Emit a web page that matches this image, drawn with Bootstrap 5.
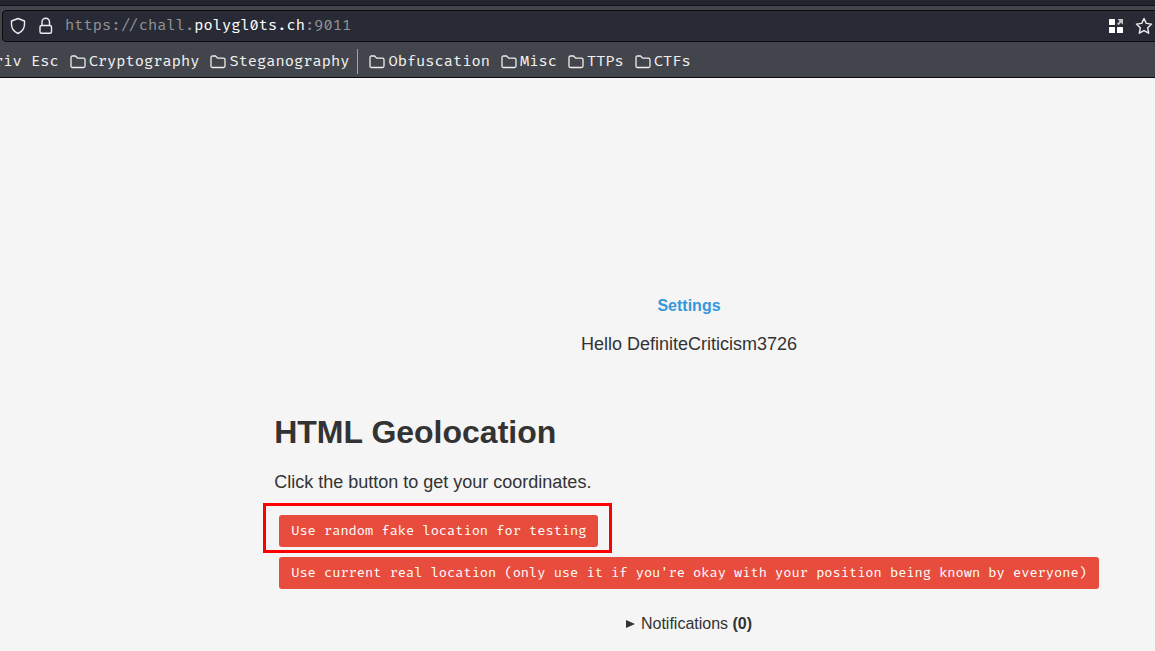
<!DOCTYPE html>
<html lang="en">
<head>
<meta charset="utf-8">
<meta name="viewport" content="width=device-width, initial-scale=1">
<title>HTML Geolocation</title>
<link href="https://cdn.jsdelivr.net/npm/bootstrap@5.3.0/dist/css/bootstrap.min.css" rel="stylesheet">
<style>
body { background: #f5f5f5; color: #333; font-family: "Liberation Sans", Arial, sans-serif; overflow-x: hidden; }
.browser { background: #43454c; border-bottom: 1px solid #0c0c0d; font-family: "Fira Code", "DejaVu Sans Mono", monospace; }
.tab-strip { height: 6px; background: #23252e; border-bottom: 1px solid #121319; }
.address { height: 32px; margin: 4px -4px 0 2px; padding: 0 5px 0 7px; background: #282a36; border: 1px solid #0c0c0d; border-radius: 4px; }
.address svg, .bookmark svg { display: block; flex: none; }
.url { font-size: 15px; line-height: 24px; margin-left: 3px; color: #939395; }
.url b { font-weight: 400; color: #fff; }
.bookmarks { height: 35px; padding-top: 4px; margin-left: -6px; font-size: 15px; line-height: 24px; overflow: hidden; }
.bookmark { display: flex; align-items: center; gap: 3px; margin-right: 11px; color: #f1f1f1; text-decoration: none; white-space: pre; }
.divider { width: 1px; height: 25px; margin: 0 11px 0 -3px; background: #a2a3a6; }
.page-body { padding: 216px 0 16px 223px; }
.settings { color: #3498db; font-weight: 700; text-decoration: none; line-height: 24px; }
.hello { font-size: 18px; line-height: 24px; margin: 14px 0 56px; }
.geo h1 { font-size: 32px; font-weight: 700; line-height: 40px; margin-bottom: 18px; }
.geo p { font-size: 18px; line-height: 24px; margin-bottom: 21px; }
.btn-geo { --bs-btn-color: #fff; --bs-btn-bg: #e74c3c; --bs-btn-hover-color: #fff; --bs-btn-hover-bg: #c0392b; --bs-btn-border-width: 0; --bs-btn-border-radius: 3px; height: 32px; padding: 0 12px; margin: 0 5px 10px; font-family: "Fira Code", "Liberation Mono", monospace; font-size: smaller; line-height: 20px; white-space: nowrap; }
.marked { position: relative; }
.marked::after { content: ""; position: absolute; inset: -12px -14px -6px -16px; border: 3px solid #f00; pointer-events: none; }
.notes { margin-top: 13px; line-height: 24px; }
.notes summary { list-style: none; display: flex; align-items: center; }
.notes summary svg { margin-right: 6px; }
</style>
</head>
<body>
<header class="browser">
  <div class="tab-strip"></div>
  <div class="address d-flex align-items-center">
    <svg width="16" height="18" viewBox="0 0 16 18" fill="none" stroke="#eee" stroke-width="1.4" stroke-linejoin="round"><path d="M8 1.500 14.500 4v3.200c0 4-2.600 7.600-6.500 9.300C4.100 14.800 1.500 11.200 1.500 7.200V4z"/></svg>
    <svg class="ms-2" width="28" height="18" viewBox="0 0 28 18" fill="none" stroke="#eee" stroke-width="1.4"><rect x="6" y="8.500" width="11.500" height="7.800" rx="1.500"/><path d="M8 8.500V5a3.700 3.700 0 0 1 7.500 0v3.500"/></svg>
    <div class="url text-nowrap flex-grow-1">https://chall.<b>polygl0ts.ch</b>:9011</div>
    <svg width="26" height="16" viewBox="0 0 26 16"><g fill="#fff"><rect x="0" y="1" width="6" height="6" rx=".6"/><rect x="0" y="9" width="6" height="6" rx=".6"/><rect x="8" y="9" width="6" height="6" rx=".6"/></g><path d="M8.500 1H14v5.700l-2-2L9.500 7.200 8 5.700l2.500-2.500z" fill="#c4c4c4"/></svg>
    <svg width="18" height="18" viewBox="0 0 18 18" fill="none" stroke="#eee" stroke-width="1.400" stroke-linejoin="round"><path d="m9 1.500 2.300 4.900 5.300.7-3.900 3.700 1 5.400L9 13.600l-4.700 2.600 1-5.400L1.400 7.100l5.300-.7z"/></svg>
  </div>
  <nav class="bookmarks d-flex align-items-center" aria-label="Bookmarks">
    <a class="bookmark" href="#">riv Esc</a>
    <a class="bookmark" href="#"><svg width="16" height="14" viewBox="0 0 16 14" fill="none" stroke="#eee" stroke-width="1.300" stroke-linejoin="round"><path id="folder" d="M1 2.500Q1 1 2.500 1H5.500L7.700 3.200H13.500Q15 3.200 15 4.700V11Q15 12.500 13.500 12.500H2.500Q1 12.500 1 11z"/></svg>Cryptography</a>
    <a class="bookmark" href="#"><svg width="16" height="14" viewBox="0 0 16 14" fill="none" stroke="#eee" stroke-width="1.300"><use href="#folder"/></svg>Steganography</a>
    <span class="divider"></span>
    <a class="bookmark" href="#"><svg width="16" height="14" viewBox="0 0 16 14" fill="none" stroke="#eee" stroke-width="1.300"><use href="#folder"/></svg>Obfuscation</a>
    <a class="bookmark" href="#"><svg width="16" height="14" viewBox="0 0 16 14" fill="none" stroke="#eee" stroke-width="1.300"><use href="#folder"/></svg>Misc</a>
    <a class="bookmark" href="#"><svg width="16" height="14" viewBox="0 0 16 14" fill="none" stroke="#eee" stroke-width="1.300"><use href="#folder"/></svg>TTPs</a>
    <a class="bookmark" href="#"><svg width="16" height="14" viewBox="0 0 16 14" fill="none" stroke="#eee" stroke-width="1.300"><use href="#folder"/></svg>CTFs</a>
  </nav>
</header>
<main class="page-body d-flex flex-column align-items-center">
  <a class="settings" href="#">Settings</a>
  <div class="hello">Hello DefiniteCriticism3726</div>
  <section class="geo d-flex flex-column align-items-start">
    <h1>HTML Geolocation</h1>
    <p>Click the button to get your coordinates.</p>
    <button class="btn btn-geo marked" type="button">Use random fake location for testing</button>
    <button class="btn btn-geo" type="button">Use current real location (only use it if you're okay with your position being known by everyone)</button>
  </section>
  <details class="notes"><summary><svg width="9" height="8" viewBox="0 0 9 8"><path d="M0 0l9 4-9 4z" fill="#333"/></svg><span>Notifications <b>(0)</b></span></summary></details>
</main>
<script src="https://cdn.jsdelivr.net/npm/bootstrap@5.3.0/dist/js/bootstrap.bundle.min.js"></script>
</body>
</html>
